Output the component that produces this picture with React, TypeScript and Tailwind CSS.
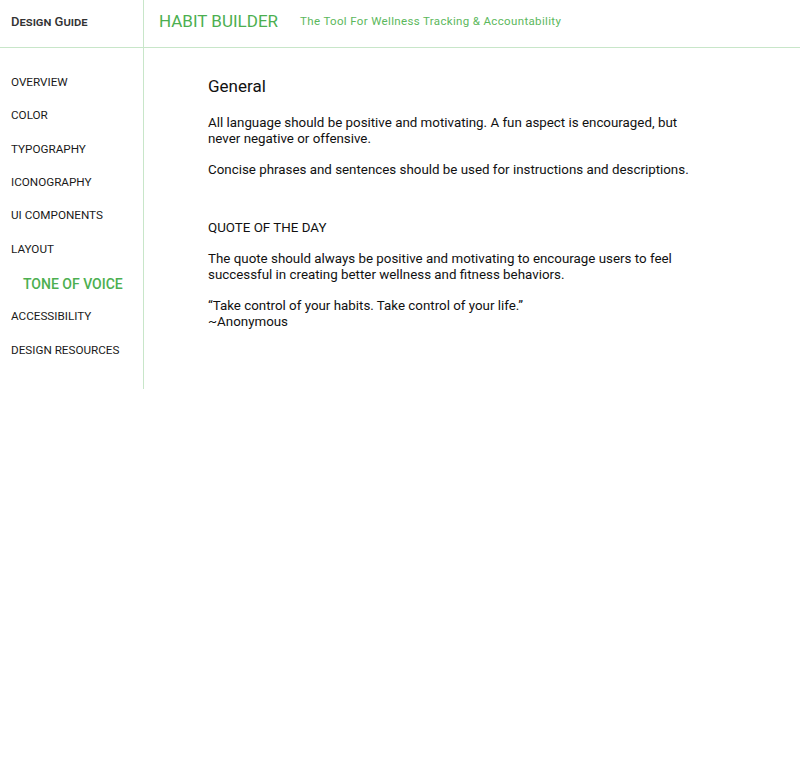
import React from "react";

const navItems = [
  "OVERVIEW",
  "COLOR",
  "TYPOGRAPHY",
  "ICONOGRAPHY",
  "UI COMPONENTS",
  "LAYOUT",
  "TONE OF VOICE",
  "ACCESSIBILITY",
  "DESIGN RESOURCES",
];

const App = () => {
  return (
    <div className="min-h-[778px] bg-white font-['Roboto',sans-serif] text-[#111]">
      {/* Header */}
      <header className="flex h-12 border-b border-[#c8e6c9]">
        <div className="flex w-[144px] shrink-0 items-center border-r border-[#c8e6c9] pb-[3px] pl-[11px]">
          <span className="text-[13px] font-medium text-[#333] [font-variant:small-caps]">
            Design Guide
          </span>
        </div>
        <div className="flex items-center pb-[4px] pl-[15px]">
          <span className="text-[17px] text-[#4caf50]">HABIT BUILDER</span>
          <span className="ml-[22px] text-[11.5px] tracking-[0.35px] text-[#5cb85c]">
            The Tool For Wellness Tracking &amp; Accountability
          </span>
        </div>
      </header>

      <div className="flex">
        {/* Sidebar */}
        <nav className="w-[144px] shrink-0 border-r border-[#c8e6c9] pt-[18px] pb-[22px]">
          {navItems.map((item) => {
            const active = item === "TONE OF VOICE";
            return (
              <div
                key={item}
                className={
                  active
                    ? "flex h-[34px] items-center pt-[3px] pl-[23px] text-[14px] font-medium text-[#4caf50]"
                    : "flex h-[33.4px] items-center pl-[11px] text-[11.7px] text-[#1a1a1a]"
                }
              >
                {item}
              </div>
            );
          })}
        </nav>

        {/* Content */}
        <main className="pl-[64px] pt-[28px] text-[13.35px] leading-4">
          <h2 className="text-[17px] leading-5">General</h2>
          <p className="mt-[19px] w-[490px]">
            All language should be positive and motivating. A fun aspect is encouraged, but
            never negative or offensive.
          </p>
          <p className="mt-[15px]">
            Concise phrases and sentences should be used for instructions and descriptions.
          </p>
          <h3 className="mt-[42px]">QUOTE OF THE DAY</h3>
          <p className="mt-[15px] w-[480px]">
            The quote should always be positive and motivating to encourage users to feel
            successful in creating better wellness and fitness behaviors.
          </p>
          <p className="mt-[15px]">
            “Take control of your habits. Take control of your life.”
            <br />
            ~Anonymous
          </p>
        </main>
      </div>
    </div>
  );
};

export default App;
